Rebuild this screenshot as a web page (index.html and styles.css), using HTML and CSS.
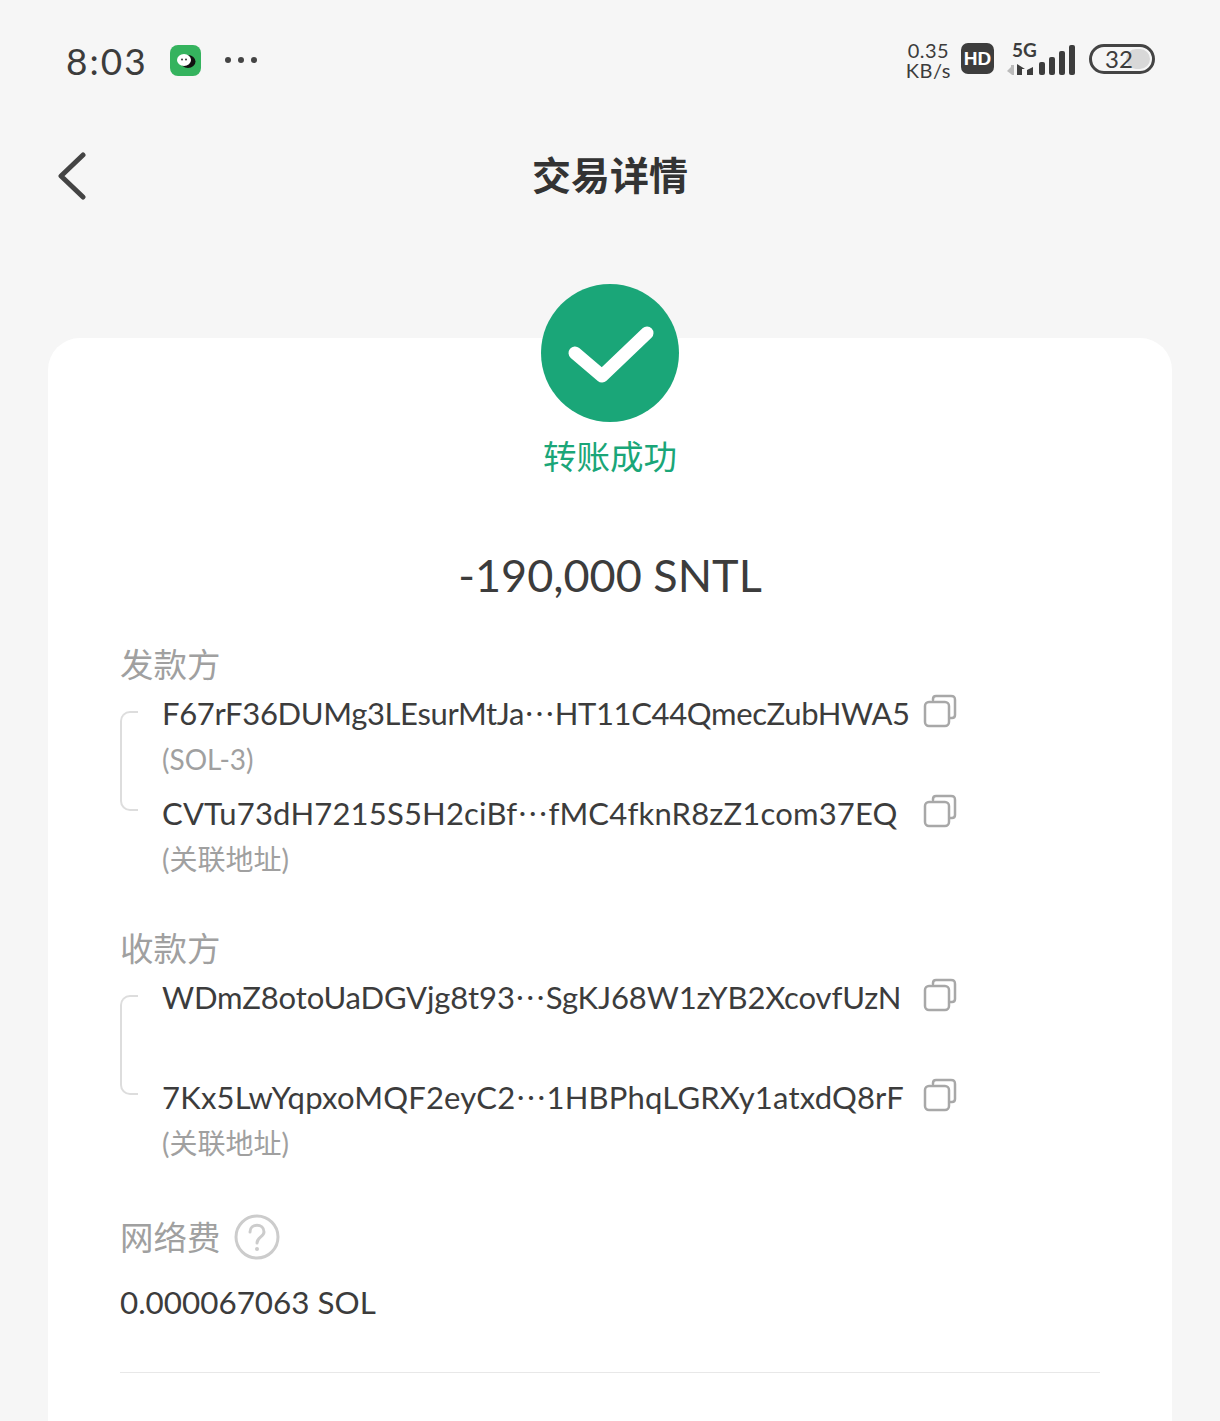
FILE: index.html
```html
<!DOCTYPE html>
<html lang="zh-CN">
<head>
  <meta charset="UTF-8" />
  <meta name="viewport" content="width=device-width, initial-scale=1.0" />
  <title>交易详情</title>
  <link rel="stylesheet" href="styles.css">
</head>
<body>
  <div class="status-bar">
    <div class="status-left">
      <span class="time">8:03</span>
      <svg class="app-icon" viewBox="0 0 31 31" width="31" height="31">
        <rect width="31" height="31" rx="8" fill="#35b35e"/>
        <ellipse cx="18" cy="16.500" rx="7.500" ry="6.500" fill="#111"/>
        <ellipse cx="14" cy="15" rx="7" ry="6" fill="#fff"/>
        <circle cx="12" cy="14.500" r="1" fill="#333"/>
        <circle cx="16" cy="14.500" r="1" fill="#333"/>
      </svg>
      <svg class="more-icon" viewBox="0 0 34 8" width="34" height="8">
        <circle cx="4" cy="4" r="3" fill="#444"/>
        <circle cx="17" cy="4" r="3" fill="#444"/>
        <circle cx="30" cy="4" r="3" fill="#444"/>
      </svg>
    </div>
    <div class="status-right">
      <div class="speed"><span>0.35</span><span>KB/s</span></div>
      <svg class="hd-icon" viewBox="0 0 33 31" width="33" height="31">
        <rect width="33" height="31" rx="7" fill="#3d3d3d"/>
        <text x="16.500" y="22" text-anchor="middle" class="hd-text">HD</text>
      </svg>
      <svg class="signal-icon" viewBox="0 -6 70 42" width="70" height="42">
        <text x="5" y="15" class="g-text">5G</text>
        <path d="M0 29 L4 25 V23 H7 V33 H5 L4 32 Z" fill="#bbb"/>
        <path d="M10 22 L18 27 H15 V33 H10 Z" fill="#3d3d3d"/>
        <path d="M20 33 V28 L26 25 V33 Z" fill="#3d3d3d"/>
        <rect x="32" y="20" width="6" height="13" rx="2" fill="#3d3d3d"/>
        <rect x="42" y="15" width="6" height="18" rx="2" fill="#3d3d3d"/>
        <rect x="52" y="9" width="6" height="24" rx="2" fill="#3d3d3d"/>
        <rect x="62" y="3" width="6" height="30" rx="2" fill="#3d3d3d"/>
      </svg>
      <div class="battery"><span class="battery-fill"></span><span class="battery-num">32</span></div>
    </div>
  </div>

  <div class="nav-bar">
    <svg class="back-icon" viewBox="0 0 30 48" width="30" height="48">
      <path d="M27 3 L5 24 L27 45" fill="none" stroke="#444" stroke-width="5" stroke-linecap="round" stroke-linejoin="round"/>
    </svg>
    <h1>交易详情</h1>
  </div>

  <div class="card">
    <svg class="success-icon" viewBox="0 0 138 138" width="138" height="138">
      <circle cx="69" cy="69" r="69" fill="#1aa678"/>
      <path d="M34 69 L61 92 L106 49" fill="none" stroke="#fff" stroke-width="13" stroke-linecap="round" stroke-linejoin="round"/>
    </svg>
    <div class="success-text">转账成功</div>
    <div class="amount">-190,000 SNTL</div>

    <div class="label label-from">发款方</div>
    <div class="addr-group">
      <div class="bracket"></div>
      <div class="addr-list">
        <div class="addr-row">
          <div class="addr addr-tight">F67rF36DUMg3LEsurMtJa<span class="dots">⋯</span>HT11C44QmecZubHWA5</div>
          <svg class="copy-icon" viewBox="0 0 34 34" width="34" height="34"><use href="#copy"/></svg>
          <div class="note">(SOL-3)</div>
        </div>
        <div class="addr-row">
          <div class="addr addr-wide">CVTu73dH7215S5H2ciBf<span class="dots">⋯</span>fMC4fknR8zZ1com37EQ</div>
          <svg class="copy-icon" viewBox="0 0 34 34" width="34" height="34"><use href="#copy"/></svg>
          <div class="note">(关联地址)</div>
        </div>
      </div>
    </div>

    <div class="label label-to">收款方</div>
    <div class="addr-group">
      <div class="bracket"></div>
      <div class="addr-list">
        <div class="addr-row">
          <div class="addr addr-slim">WDmZ8otoUaDGVjg8t93<span class="dots">⋯</span>SgKJ68W1zYB2XcovfUzN</div>
          <svg class="copy-icon" viewBox="0 0 34 34" width="34" height="34"><use href="#copy"/></svg>
          <div class="note"></div>
        </div>
        <div class="addr-row">
          <div class="addr addr-wide">7Kx5LwYqpxoMQF2eyC2<span class="dots">⋯</span>1HBPhqLGRXy1atxdQ8rF</div>
          <svg class="copy-icon" viewBox="0 0 34 34" width="34" height="34"><use href="#copy"/></svg>
          <div class="note">(关联地址)</div>
        </div>
      </div>
    </div>

    <div class="fee-label">
      <span class="label">网络费</span>
      <svg class="help-icon" viewBox="0 0 46 46" width="46" height="46">
        <circle cx="23" cy="23" r="21" fill="none" stroke="#ccc" stroke-width="3"/>
        <path d="M16 18 C16 9 30 9 30 18 C30 23 23 23 23 29" fill="none" stroke="#ccc" stroke-width="3" stroke-linecap="round"/>
        <circle cx="23" cy="35" r="2" fill="#ccc"/>
      </svg>
    </div>
    <div class="fee">0.000067063 SOL</div>
    <div class="divider"></div>
  </div>

  <svg class="defs" width="0" height="0">
    <symbol id="copy" viewBox="0 0 34 34">
      <path d="M10 6 V5 C10 3 11 2 13 2 H28 C31 2 32 3 32 6 V21 C32 23 31 24 29 24 H27" fill="none" stroke="#a8a8a8" stroke-width="2.500" stroke-linecap="round"/>
      <rect x="2" y="8" width="24" height="24" rx="4" fill="none" stroke="#a8a8a8" stroke-width="2.500"/>
    </symbol>
  </svg>
</body>
</html>
```

FILE: styles.css
```css
body {
  margin: 0;
  height: 1421px;
  overflow: hidden;
  background: #f6f6f6;
  color: #3c3c3c;
  font-family: Lato, "Noto Sans CJK SC", sans-serif;
}
.status-bar {
  height: 118px;
  padding: 2px 65px 0 66px;
  display: flex;
  justify-content: space-between;
  align-items: center;
  box-sizing: border-box;
}
.status-left {
  display: flex;
  align-items: center;
}
.time {
  font-size: 37px;
  width: 104px;
  letter-spacing: 2px;
}
.more-icon {
  margin-left: 23px;
}
.status-right {
  display: flex;
  align-items: center;
}
.speed {
  display: flex;
  flex-direction: column;
  align-items: center;
  font-size: 20px;
  line-height: 20px;
  letter-spacing: 0.5px;
  margin-right: 10px;
}
.hd-icon {
  margin: 0 13px 3px 0;
}
.hd-text {
  font-family: "Liberation Sans", sans-serif;
  font-weight: bold;
  font-size: 19px;
  fill: #fff;
}
.g-text {
  font-family: Lato, sans-serif;
  font-size: 19px;
  font-weight: bold;
  fill: #3d3d3d;
}
.signal-icon {
  margin: 0 12px 6px 0;
}
.battery {
  width: 66px;
  height: 30px;
  margin-bottom: 3px;
  border: 3px solid #444;
  border-radius: 15px;
  box-sizing: border-box;
  display: flex;
  align-items: center;
  justify-content: center;
  position: relative;
  font-size: 24px;
}
.battery-fill {
  position: absolute;
  right: 2px;
  top: 2px;
  width: 24px;
  height: 20px;
  background: #d8d8d8;
  border-radius: 10px;
}
.battery-num {
  position: relative;
  margin-right: 6px;
}
.nav-bar {
  height: 116px;
  padding-left: 56px;
  display: flex;
  align-items: center;
  position: relative;
}
.nav-bar h1 {
  margin: 0;
  position: absolute;
  top: -1px;
  left: 0;
  right: 0;
  text-align: center;
  font-size: 39px;
  line-height: 116px;
  font-weight: bold;
  color: #333;
}
.card {
  margin: 104px 48px 0;
  padding: 0 72px;
  background: #fff;
  border-radius: 32px 32px 0 0;
  height: 1083px;
  display: flex;
  flex-direction: column;
}
.success-icon {
  margin: -54px auto 0;
  flex: none;
}
.success-text {
  margin-top: 10px;
  height: 48px;
  line-height: 48px;
  text-align: center;
  font-size: 33.500px;
  color: #1aa678;
}
.amount {
  margin-top: 65px;
  height: 60px;
  line-height: 60px;
  text-align: center;
  font-size: 45px;
}
.label {
  font-size: 33.500px;
  line-height: 46px;
  color: #a0a0a0;
}
.label-from {
  margin-top: 36px;
}
.label-to {
  margin-top: 36px;
}
.addr-group {
  display: flex;
  width: 837px;
  margin-top: 2px;
}
.bracket {
  width: 18px;
  height: 100px;
  margin-top: 22px;
  flex: none;
  box-sizing: border-box;
  border: 2px solid #ddd;
  border-right: 0;
  border-radius: 10px 0 0 10px;
}
.addr-list {
  flex: 1;
  margin-left: 24px;
}
.addr-row {
  display: grid;
  grid-template-columns: minmax(0, 1fr) 34px;
  align-items: center;
  align-content: start;
  height: 100px;
}
.addr {
  font-size: 31px;
  line-height: 46px;
  white-space: nowrap;
}
.addr-tight {
  letter-spacing: -0.35px;
}
.addr-slim {
  letter-spacing: -0.12px;
}
.addr-wide {
  letter-spacing: 0.18px;
}
.dots {
  font-family: "Noto Sans CJK SC", sans-serif;
}
.copy-icon {
  margin-top: -4px;
}
.note {
  grid-column: 1 / 3;
  font-size: 28px;
  line-height: 46px;
  height: 46px;
  color: #a0a0a0;
}
.fee-label {
  display: flex;
  align-items: center;
  margin-top: 41px;
  gap: 13px;
}
.fee {
  margin-top: 19px;
  font-size: 31.400px;
  line-height: 46px;
}
.divider {
  margin-top: 47px;
  height: 1px;
  background: #e8e8e8;
}
.defs {
  position: absolute;
}
```
